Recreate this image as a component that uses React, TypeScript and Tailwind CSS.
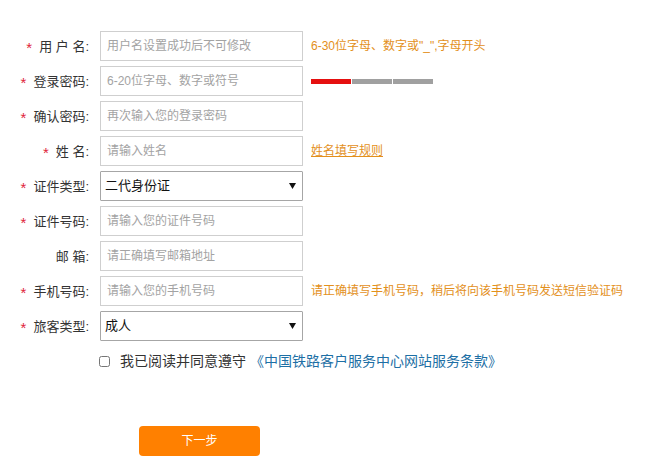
import { useState } from "react";

const font = { fontFamily: '"Liberation Sans", "Noto Sans CJK SC", sans-serif' };

type Row = {
  label: string;
  required: boolean;
  kind: "input" | "select";
  placeholder?: string;
  options?: string[];
  hint?: "username" | "strength" | "name" | "phone";
};

const rows: Row[] = [
  { label: "用 户 名:", required: true, kind: "input", placeholder: "用户名设置成功后不可修改", hint: "username" },
  { label: "登录密码:", required: true, kind: "input", placeholder: "6-20位字母、数字或符号", hint: "strength" },
  { label: "确认密码:", required: true, kind: "input", placeholder: "再次输入您的登录密码" },
  { label: "姓 名:", required: true, kind: "input", placeholder: "请输入姓名", hint: "name" },
  { label: "证件类型:", required: true, kind: "select", options: ["二代身份证", "港澳居民来往内地通行证", "台湾居民来往大陆通行证", "护照"] },
  { label: "证件号码:", required: true, kind: "input", placeholder: "请输入您的证件号码" },
  { label: "邮 箱:", required: false, kind: "input", placeholder: "请正确填写邮箱地址" },
  { label: "手机号码:", required: true, kind: "input", placeholder: "请输入您的手机号码", hint: "phone" },
  { label: "旅客类型:", required: true, kind: "select", options: ["成人", "儿童", "学生", "残疾军人"] },
];

function Hint({ type }: { type?: Row["hint"] }) {
  if (type === "username")
    return <span className="text-[12px] text-[#e3901c]">6-30位字母、数字或"_",字母开头</span>;
  if (type === "strength")
    return (
      <div className="flex gap-[1px]">
        <div className="w-[40px] h-[5px] bg-[#e50f0f]" />
        <div className="w-[40px] h-[5px] bg-[#a0a0a0]" />
        <div className="w-[40px] h-[5px] bg-[#a0a0a0]" />
      </div>
    );
  if (type === "name")
    return <a className="text-[12px] text-[#e3901c] underline cursor-pointer">姓名填写规则</a>;
  if (type === "phone")
    return <span className="text-[12px] text-[#e3901c]">请正确填写手机号码，稍后将向该手机号码发送短信验证码</span>;
  return null;
}

export default function App() {
  const [agree, setAgree] = useState(false);

  return (
    <div className="w-[648px] h-[457px] bg-white pt-[31px] text-[#333]" style={font}>
      <div className="flex flex-col gap-[5px]">
        {rows.map((r) => (
          <div key={r.label} className="flex items-center h-[30px]">
            <div className="w-[89px] flex justify-end items-center text-[13px] leading-none">
              {r.required && <span className="text-[#e0243a] text-[15px] mr-[7px] mt-[3px]">*</span>}
              <span className="whitespace-pre">{r.label}</span>
            </div>
            {r.kind === "input" ? (
              <input
                className="ml-[11px] w-[203px] h-[30px] border border-[#cfcfcf] px-[6px] text-[12px] outline-none placeholder:text-[#a3a3a3]"
                placeholder={r.placeholder}
              />
            ) : (
              <div className="relative ml-[11px] w-[203px] h-[30px]">
                <select className="appearance-none w-full h-full border border-[#a6a6a6] rounded-[1px] pl-[4px] text-[13px] text-[#111] bg-white outline-none">
                  {r.options?.map((o) => (
                    <option key={o}>{o}</option>
                  ))}
                </select>
                <svg className="absolute right-[7px] top-[12px] pointer-events-none" width="7" height="6" viewBox="0 0 7 6">
                  <path d="M0 0h7L3.5 6z" fill="#111" />
                </svg>
              </div>
            )}
            <div className="ml-[8px] flex items-center">
              <Hint type={r.hint} />
            </div>
          </div>
        ))}
      </div>

      <div className="flex items-center mt-[13px] ml-[99px] h-[14px]">
        <input
          type="checkbox"
          checked={agree}
          onChange={(e) => setAgree(e.target.checked)}
          className="w-[11px] h-[11px] m-0"
        />
        <span className="ml-[10px] text-[14px] leading-none text-[#333]">我已阅读并同意遵守</span>
        <a className="ml-[4px] text-[14px] leading-none text-[#1d6fa5] cursor-pointer">《中国铁路客户服务中心网站服务条款》</a>
      </div>

      <button className="block mt-[58px] ml-[139px] w-[121px] h-[30px] rounded-[4px] bg-[#ff8000] text-white text-[12px]">
        下一步
      </button>
    </div>
  );
}
